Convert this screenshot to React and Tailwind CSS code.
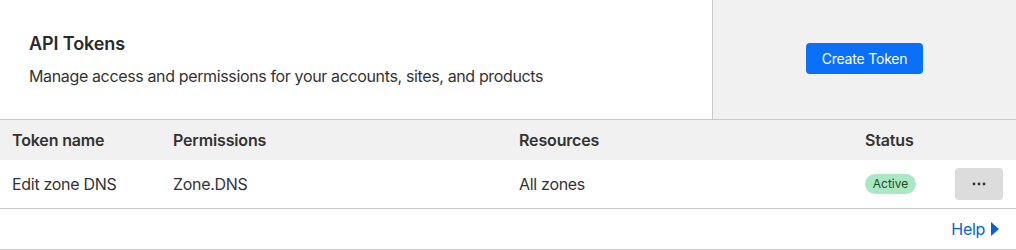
import React from "react";

export default function App() {
  return (
    <div className="w-[1016px] h-[250px] bg-white text-[#313131]" style={{ fontFamily: "Inter, 'Noto Sans', sans-serif" }}>
      <div className="flex h-[120px] border-b border-[#c9c9c9]">
        <div className="w-[713px] border-r border-[#c9c9c9] pl-[29px] pt-[31px]">
          <h1 className="text-[18px] leading-[26px] font-semibold text-[#2b2b2b] tracking-[-0.1px]">API Tokens</h1>
          <p className="mt-[8px] text-[16px] leading-[22px] text-[#333] tracking-[-0.36px]">Manage access and permissions for your accounts, sites, and products</p>
        </div>
        <div className="flex-1 bg-[#f1f1f1] flex items-center justify-center pb-[2px]">
          <button className="h-[31px] w-[117px] rounded-[4px] bg-[#0a6ff9] text-white text-[14px] tracking-[-0.2px]">Create Token</button>
        </div>
      </div>
      <div className="flex h-[40px] items-center bg-[#f1f1f1] text-[16px] font-semibold text-[#333] tracking-[-0.15px]">
        <div className="w-[173px] pl-[12px]">Token name</div>
        <div className="w-[346px]">Permissions</div>
        <div className="w-[346px]">Resources</div>
        <div className="flex-1">Status</div>
      </div>
      <div className="flex h-[49px] items-center border-b border-[#c9c9c9] text-[16px] text-[#333] tracking-[-0.3px]">
        <div className="w-[173px] pl-[12px]">Edit zone DNS</div>
        <div className="w-[346px]">Zone.DNS</div>
        <div className="w-[346px]">All zones</div>
        <div className="flex-1 flex items-center justify-between pr-[13px] tracking-normal">
          <span className="inline-flex h-[20px] w-[51px] items-center justify-center rounded-full bg-[#a9e8c2] text-[12px] text-[#1e4b2e]">Active</span>
          <button className="flex h-[32px] w-[48px] items-center justify-center rounded-[4px] bg-[#dcdcdc] text-[#333]">
            <svg width="14" height="4" viewBox="0 0 14 4"><circle cx="2" cy="2" r="1.4" fill="#333" /><circle cx="7" cy="2" r="1.4" fill="#333" /><circle cx="12" cy="2" r="1.4" fill="#333" /></svg>
          </button>
        </div>
      </div>
      <div className="flex h-[41px] items-center justify-end border-b border-[#c9c9c9] pr-[17px]">
        <a className="flex items-center gap-[6px] text-[16px] text-[#0b5fd0] tracking-[-0.3px]" href="#">
          Help
          <svg width="8" height="14" viewBox="0 0 8 14"><path d="M0 0 L8 7 L0 14 Z" fill="#0b5fd0" /></svg>
        </a>
      </div>
    </div>
  );
}
